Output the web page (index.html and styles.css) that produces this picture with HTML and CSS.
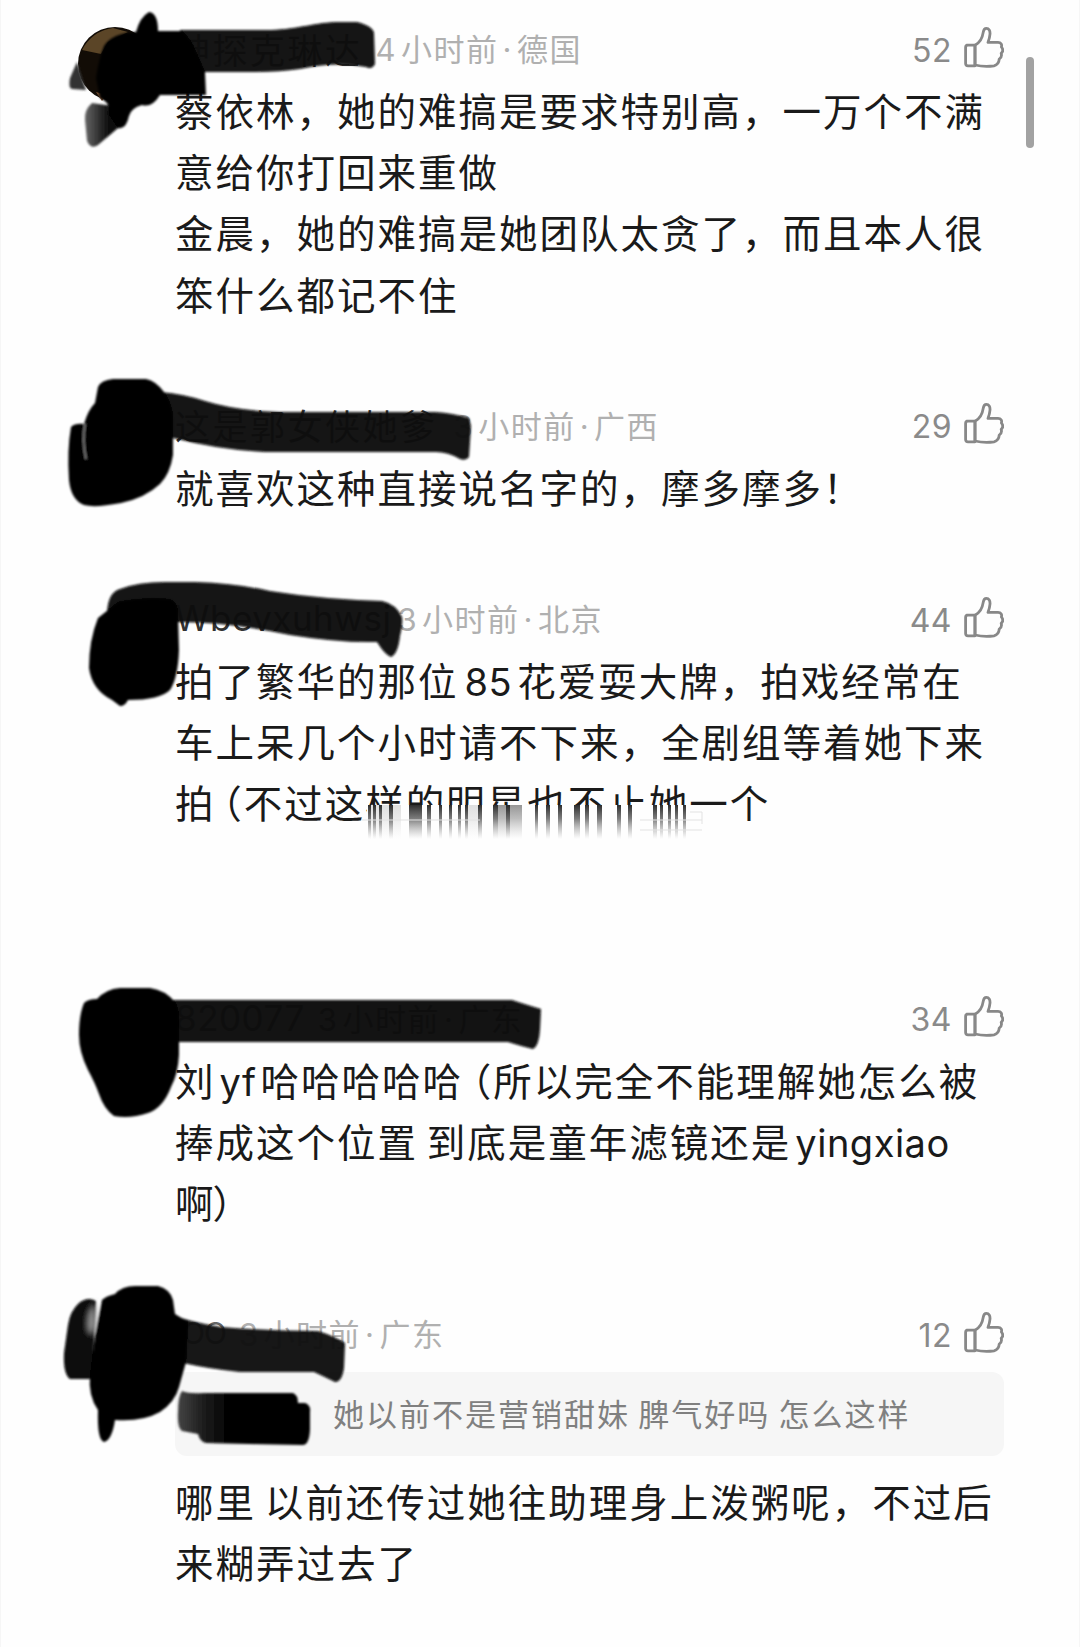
FILE: index.html
```html
<!DOCTYPE html>
<html lang="zh-CN">
<head>
  <meta charset="UTF-8">
  <meta name="viewport" content="width=device-width, initial-scale=1">
  <title>评论</title>
  <link rel="stylesheet" href="styles.css">
</head>
<body>

<svg class="defs" width="0" height="0">
  <defs>
    <filter id="soft" x="-5%" y="-5%" width="110%" height="110%"><feGaussianBlur stdDeviation="1.2"/></filter>
    <filter id="softer" x="-30%" y="-30%" width="160%" height="160%"><feGaussianBlur stdDeviation="3"/></filter>
    <linearGradient id="drip" x1="0" y1="0" x2="0" y2="1">
      <stop offset="0" stop-color="#222" stop-opacity=".95"/>
      <stop offset=".4" stop-color="#444" stop-opacity=".7"/>
      <stop offset="1" stop-color="#888" stop-opacity="0"/>
    </linearGradient>
    <linearGradient id="fade" x1="0" y1="0" x2="1" y2="0">
      <stop offset="0" stop-color="#444"/>
      <stop offset=".2" stop-color="#1c1c1c"/>
      <stop offset=".4" stop-color="#000"/>
    </linearGradient>
    <linearGradient id="smudge" x1="0" y1="0" x2="1" y2="0">
      <stop offset="0" stop-color="#666"/>
      <stop offset=".6" stop-color="#0a0a0a"/>
    </linearGradient>
    <symbol id="like" viewBox="0 0 40 42">
      <path d="M2.8 18.2H11V38.8H4Q1.6 38.8 1.6 36.4V20.4Q1.6 18.2 3.8 18.2Z"/>
      <path d="M11 18.2C16 15.6 18.4 11 19.2 5.4C19.6 2.6 20.8 1.4 22.4 1.4C25 1.4 26.2 3.8 26 7C25.8 10 25 12.6 24 15.4H34C37 15.4 38.2 17.6 37.4 20C39 22 39.2 24.6 37.2 26.4C38 29 37 31 35.2 32.2C35 35.6 33.4 38 30 38.8C24 39.6 17 39.4 11 38Z"/>
    </symbol>
  </defs>
</svg>

<main class="comments">

  <article class="comment">
    <div class="meta">
      <span class="name">神探克琳达</span>
      <span class="time"><i>4</i>小时前<b>·</b>德国</span>
      <span class="likes">52 <svg><use href="#like"/></svg></span>
    </div>
    <p class="text">蔡依林，她的难搞是要求特别高，一万个不满<br>意给你打回来重做<br>金晨，她的难搞是她团队太贪了，而且本人很<br>笨什么都记不住</p>
    <svg class="ink" viewBox="0 19 1080 310">
      <circle cx="115" cy="64" r="37" fill="#120c06"/>
      <path d="M82 50Q92 31 113 28L128 32L108 42L101 54Z" fill="#5b4527"/>
      <path d="M96 92L107 95L102 101Z" fill="#7a5030"/>
      <g filter="url(#soft)">
        <path d="M77 62L70 78Q68 88 72 89L86 90Z" fill="#333"/>
        <path d="M92 103Q84 110 85 120L87 141Q91 150 98 145L118 128L126 108Z" fill="url(#smudge)"/>
        <path d="M180 30H271C300 29 315 22 340 22H357Q373 26 374 33L375 64Q372 70 366 67C340 62 320 65 300 69Q280 72 255 72H180Z" fill="#080808" fill-opacity=".97"/>
        <path d="M104 46Q112 33 136 32Q140 17 149 12Q158 13 158 31L182 31Q192 40 196 52L205 72L206 95L160 95Q152 108 142 105Q131 108 129 116Q126 130 118 128L108 113Q112 104 100 98L96 78Q99 58 104 46Z" fill="#000"/>
      </g>
    </svg>
  </article>

  <article class="comment">
    <div class="meta">
      <span class="name">这是郭女侠她爹</span>
      <span class="time late"><i>3</i>小时前<b>·</b>广西</span>
      <span class="likes">29 <svg><use href="#like"/></svg></span>
    </div>
    <p class="text">就喜欢这种直接说名字的，摩多摩多！</p>
    <svg class="ink" viewBox="0 396 1080 310">
      <g filter="url(#soft)">
        <path d="M160 392Q184 394 205 401Q240 412 290 412H435Q452 413 469 418L471 426L469 457Q466 461 460 459Q448 452 436 452H265Q220 450 173 438Z" fill="#080808" fill-opacity=".97"/>
        <path d="M98 387Q101 380 113 379L146 379Q156 381 164 392Q173 404 173 420V455Q170 474 160 484Q145 498 121 503Q95 508 84 505Q71 500 69 480Q67 450 71 427Q75 423 84 424Q88 410 95 403Z" fill="#000"/>
        <path d="M85 424Q82 440 86 459" fill="none" stroke="#888" stroke-width="1.5"/>
      </g>
    </svg>
  </article>

  <article class="comment comment-cut">
    <div class="meta">
      <span class="name latin">Wbevxuhwsj</span>
      <span class="time early"><i>3</i>小时前<b>·</b>北京</span>
      <span class="likes">44 <svg><use href="#like"/></svg></span>
    </div>
    <p class="text">拍了繁华的那位<span class="num age">85</span>花爱耍大牌，拍戏经常在<br>车上呆几个小时请不下来，全剧组等着她下来<br>拍<span class="paren">（</span>不过这样的明星也不止她一个</p>
    <svg class="ink" viewBox="0 589 1080 310">
      <g filter="url(#soft)">
        <path d="M107 613Q108 592 120 589Q138 582 165 582H195Q235 583 270 591Q320 599 382 601Q396 604 402 617Q403 625 400 636Q398 654 391 657Q385 655 377 642Q340 643 290 635Q230 622 178 622Z" fill="#080808" fill-opacity=".97"/>
        <path d="M98 618L118 602Q140 597 170 599Q178 602 178 615L179 650Q178 678 170 690Q160 700 128 700Q125 706 120 706L112 700Q92 690 89 668Q89 640 98 618Z" fill="#000"/>
      </g>
      <!-- lower half of the last line is dragged down -->
      <rect x="367" y="805" width="324" height="34" fill="#fefefe"/>
      <g fill="url(#drip)">
        <rect x="368" y="805" width="3" height="34"/><rect x="373" y="805" width="3" height="34"/><rect x="379" y="805" width="3" height="34"/><rect x="389" y="805" width="4" height="34"/>
        <rect x="369" y="805" width="32" height="34" opacity=".15"/>
        <rect x="409" y="805" width="13" height="34"/><rect x="427" y="805" width="4" height="34"/><rect x="439" y="805" width="3" height="34"/>
        <rect x="449" y="805" width="3" height="34"/><rect x="458" y="805" width="3" height="34"/><rect x="465" y="805" width="3" height="34"/><rect x="478" y="805" width="4" height="34"/>
        <rect x="465" y="805" width="15" height="34" opacity=".15"/>
        <rect x="493" y="805" width="5" height="34"/><rect x="506" y="805" width="4" height="34"/><rect x="498" y="805" width="24" height="34" opacity=".5"/>
        <rect x="535" y="805" width="3" height="34"/><rect x="546" y="805" width="4" height="34"/><rect x="558" y="805" width="4" height="34"/>
        <rect x="574" y="805" width="6" height="34"/><rect x="585" y="805" width="4" height="34"/><rect x="597" y="805" width="5" height="34"/>
        <rect x="617" y="805" width="4" height="34"/><rect x="628" y="805" width="4" height="34"/>
        <rect x="653" y="805" width="4" height="34"/><rect x="660" y="805" width="3" height="34"/><rect x="668" y="805" width="3" height="34"/><rect x="675" y="805" width="3" height="34"/><rect x="683" y="805" width="3" height="34"/>
      </g>
      <g fill="none" stroke="#e2e2e2">
        <path d="M362 820H480M640 820H702M640 830H702M690 812H702V824"/>
      </g>
    </svg>
  </article>

  <article class="comment">
    <div class="meta">
      <span class="name latin">820077</span>
      <span class="time hidden"><i>3</i>小时前<b>·</b>广东</span>
      <span class="likes">34 <svg><use href="#like"/></svg></span>
    </div>
    <p class="text">刘<span class="num">yf</span>哈哈哈哈哈<span class="paren wide">（</span>所以完全不能理解她怎么被<br>捧成这个位置 到底是童年滤镜还是<span class="num">yingxiao</span><br>啊<span class="paren close">）</span></p>
    <svg class="ink" viewBox="0 989 1080 310">
      <g filter="url(#soft)">
        <path d="M170 1000H512Q524 1004 541 1009L540 1030Q539 1046 533 1049Q524 1047 508 1042H170Z" fill="#090909" fill-opacity=".975"/>
        <path d="M84 1003Q88 999 97 999Q106 989 120 988H150Q165 990 175 1002Q179 1008 179 1020V1055Q178 1074 171 1087Q163 1108 148 1113Q130 1119 114 1116Q104 1109 99 1094Q95 1083 88 1070Q79 1052 79 1035Q79 1015 84 1003Z" fill="#000"/>
      </g>
    </svg>
  </article>

  <article class="comment">
    <div class="meta">
      <span class="name latin short">OO</span>
      <span class="time"><i>3</i>小时前<b>·</b>广东</span>
      <span class="likes">12 <svg><use href="#like"/></svg></span>
    </div>
    <div class="quote">她以前不是营销甜妹 脾气好吗 怎么这样</div>
    <p class="text">哪里 以前还传过她往助理身上泼粥呢，不过后<br>来糊弄过去了</p>
    <svg class="ink" viewBox="0 1304 1080 310">
      <g filter="url(#soft)">
        <path d="M96 1301Q88 1296 79 1303Q70 1311 68 1325L64 1353Q63 1374 70 1379H92Z" fill="#0a0a0a"/>
        <path d="M95 1303Q85 1310 87 1330Q92 1342 97 1325Z" fill="#999" filter="url(#softer)"/>
        <path d="M170 1314Q190 1322 221 1327Q270 1331 318 1331Q334 1336 345 1343L344 1368Q342 1382 335 1382Q327 1378 314 1372H240Q210 1369 183 1363Z" fill="#080808" fill-opacity=".96"/>
        <path d="M102 1300Q106 1296 115 1294Q122 1286 135 1286H158Q170 1289 173 1300L175 1314L188 1322L186 1362L179 1387Q175 1402 160 1412Q142 1422 115 1420Q112 1440 104 1442Q97 1440 98 1410Q88 1396 90 1375L95 1337Z" fill="#000"/>
        <path d="M182 1391Q189 1394 204 1393H293Q298 1395 298 1403H305Q311 1405 310 1412V1430Q309 1446 302 1445L206 1443Q200 1442 198 1434L182 1431Q177 1428 178 1412Q178 1396 182 1391Z" fill="url(#fade)"/>
      </g>
    </svg>
  </article>

</main>

<div class="scrollbar"></div>

</body>
</html>
```

FILE: styles.css
```css
* {
  box-sizing: border-box;
}

body {
  margin: 0;
  height: 1647px;
  overflow: hidden;
  background: #fefefe;
  border-left: 1px solid #f6f6f6;
  border-right: 1px solid #f6f6f6;
  color: #1a1a1a;
  font-family: Inter, "Noto Sans CJK SC", sans-serif;
}

.defs {
  position: absolute;
}

.comments {
  padding-top: 19px;
}

.comment {
  position: relative;
  margin-bottom: 70px;
  padding: 0 75px 0 174px;
}

.comment-cut {
  margin-bottom: 154px;
}

.meta {
  display: flex;
  align-items: center;
  height: 62px;
  color: #b0b0b0;
  white-space: nowrap;
}

.name {
  margin-top: -4px;
  font-size: 35px;
  letter-spacing: 2.5px;
  color: #333;
}

.name.latin {
  letter-spacing: 0.5px;
}

.name.short {
  padding-left: 7px;
  font-size: 30px;
  letter-spacing: -1px;
  color: #666;
}

.time {
  margin-top: -5px;
  margin-left: 13px;
  font-size: 31px;
  letter-spacing: 1.5px;
}

.time.late {
  margin-left: 16px;
}

.time.early {
  margin-left: 6px;
}

.time.hidden {
  color: #333;
}

.time i {
  font-style: normal;
  margin-right: 4px;
}

.time b {
  font-weight: 400;
  margin: 0 4px;
}

.likes {
  display: flex;
  align-items: center;
  gap: 12px;
  margin-left: auto;
  font-size: 32px;
  letter-spacing: 0.5px;
  color: #8a8a8a;
}

.likes svg {
  width: 40px;
  height: 42px;
  margin-top: -5px;
  fill: none;
  stroke: #888;
  stroke-width: 2.8;
  stroke-linejoin: round;
}

.text {
  margin: 0;
  position: relative;
  top: 1px;
  font-size: 38.5px;
  line-height: 61.2px;
  letter-spacing: 2px;
  word-spacing: -4px;
  white-space: nowrap;
}

.num {
  font-size: 38px;
  line-height: 1;
  letter-spacing: 0.5px;
  margin: 0 4px;
}

.num.age {
  margin: 0 5px 0 6px;
}

/* half-width brackets */
.paren {
  margin-left: 7px;
  font-family: "Noto Sans CJK SC", sans-serif;
  font-feature-settings: "halt";
  line-height: 1;
}

.paren.wide {
  margin-left: 9px;
}

.paren.close {
  margin-left: -3px;
}

.quote {
  height: 84px;
  margin: 6px 0 16px;
  padding-left: 158px;
  border-radius: 12px;
  background: #f6f6f6;
  color: #808080;
  font-size: 31px;
  line-height: 86px;
  letter-spacing: 2px;
  word-spacing: -2.5px;
  white-space: nowrap;
}

/* marker strokes over avatars and names */
.ink {
  position: absolute;
  top: 0;
  left: -1px;
  width: 1080px;
  height: 310px;
  overflow: visible;
  pointer-events: none;
}

.scrollbar {
  position: absolute;
  top: 57px;
  left: 1026px;
  width: 8px;
  height: 91px;
  border-radius: 4px;
  background: #a2a2a2;
}
```
